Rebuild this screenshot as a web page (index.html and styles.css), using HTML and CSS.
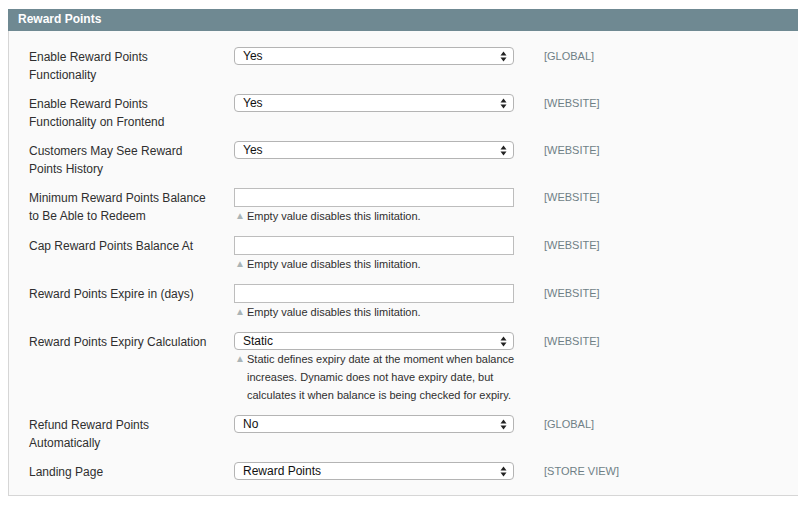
FILE: index.html
```html
<!DOCTYPE html>
<html>
<head>
<meta charset="utf-8">
<link rel="stylesheet" href="styles.css">
</head>
<body>
<div class="page">
  <div class="section-head">Reward Points</div>
  <div class="section-body">
    <div class="row">
      <div class="label">Enable Reward Points Functionality</div>
      <div class="value">
        <div class="sel"><select><option>Yes</option></select><svg class="arr" width="7" height="11" viewBox="0 0 7 11"><path d="M3.5 0.5 L6.5 4.5 L0.5 4.5 Z M3.5 10.5 L6.5 6.5 L0.5 6.5 Z" fill="#222"/></svg></div>
      </div>
      <div class="scope">[GLOBAL]</div>
    </div>
    <div class="row">
      <div class="label">Enable Reward Points Functionality on Frontend</div>
      <div class="value">
        <div class="sel"><select><option>Yes</option></select><svg class="arr" width="7" height="11" viewBox="0 0 7 11"><path d="M3.5 0.5 L6.5 4.5 L0.5 4.5 Z M3.5 10.5 L6.5 6.5 L0.5 6.5 Z" fill="#222"/></svg></div>
      </div>
      <div class="scope">[WEBSITE]</div>
    </div>
    <div class="row">
      <div class="label">Customers May See Reward Points History</div>
      <div class="value">
        <div class="sel"><select><option>Yes</option></select><svg class="arr" width="7" height="11" viewBox="0 0 7 11"><path d="M3.5 0.5 L6.5 4.5 L0.5 4.5 Z M3.5 10.5 L6.5 6.5 L0.5 6.5 Z" fill="#222"/></svg></div>
      </div>
      <div class="scope">[WEBSITE]</div>
    </div>
    <div class="row">
      <div class="label">Minimum Reward Points Balance to Be Able to Redeem</div>
      <div class="value">
        <input class="text" type="text">
        <p class="note"><span class="tri">▲</span>Empty value disables this limitation.</p>
      </div>
      <div class="scope">[WEBSITE]</div>
    </div>
    <div class="row">
      <div class="label">Cap Reward Points Balance At</div>
      <div class="value">
        <input class="text" type="text">
        <p class="note"><span class="tri">▲</span>Empty value disables this limitation.</p>
      </div>
      <div class="scope">[WEBSITE]</div>
    </div>
    <div class="row">
      <div class="label">Reward Points Expire in (days)</div>
      <div class="value">
        <input class="text" type="text">
        <p class="note"><span class="tri">▲</span>Empty value disables this limitation.</p>
      </div>
      <div class="scope">[WEBSITE]</div>
    </div>
    <div class="row">
      <div class="label">Reward Points Expiry Calculation</div>
      <div class="value">
        <div class="sel"><select><option>Static</option></select><svg class="arr" width="7" height="11" viewBox="0 0 7 11"><path d="M3.5 0.5 L6.5 4.5 L0.5 4.5 Z M3.5 10.5 L6.5 6.5 L0.5 6.5 Z" fill="#222"/></svg></div>
        <p class="note"><span class="tri">▲</span>Static defines expiry date at the moment when balance increases. Dynamic does not have expiry date, but calculates it when balance is being checked for expiry.</p>
      </div>
      <div class="scope">[WEBSITE]</div>
    </div>
    <div class="row">
      <div class="label">Refund Reward Points Automatically</div>
      <div class="value">
        <div class="sel"><select><option>No</option></select><svg class="arr" width="7" height="11" viewBox="0 0 7 11"><path d="M3.5 0.5 L6.5 4.5 L0.5 4.5 Z M3.5 10.5 L6.5 6.5 L0.5 6.5 Z" fill="#222"/></svg></div>
      </div>
      <div class="scope">[GLOBAL]</div>
    </div>
    <div class="row">
      <div class="label">Landing Page</div>
      <div class="value">
        <div class="sel"><select><option>Reward Points</option></select><svg class="arr" width="7" height="11" viewBox="0 0 7 11"><path d="M3.5 0.5 L6.5 4.5 L0.5 4.5 Z M3.5 10.5 L6.5 6.5 L0.5 6.5 Z" fill="#222"/></svg></div>
      </div>
      <div class="scope">[STORE VIEW]</div>
    </div>
  </div>
</div>
</body>
</html>
```
FILE: styles.css
```css
html, body {
  margin: 0;
  padding: 0;
  background: #ffffff;
}
body {
  font-family: "Liberation Sans", Arial, Helvetica, sans-serif;
  font-size: 12px;
  color: #2f2f2f;
}
.page {
  padding: 9px 9px 0 8px;
}
.section-head {
  height: 22px;
  line-height: 21px;
  background: #6f8992;
  color: #ffffff;
  font-weight: bold;
  font-size: 12px;
  padding-left: 10px;
}
.section-body {
  background: #fafafa;
  border-left: 1px solid #d6d6d6;
  border-bottom: 1px solid #d6d6d6;
  padding: 11px 0 9px 20px;
}
.row {
  display: grid;
  grid-template-columns: 205px 280px auto;
  column-gap: 0;
  padding: 5px 0 6px;
}
.label {
  line-height: 18px;
  padding-top: 1px;
  margin-bottom: -1px;
  padding-right: 21px;
}
.value {
  width: 280px;
}
.sel {
  position: relative;
  height: 18px;
}
.sel select {
  -webkit-appearance: none;
  appearance: none;
  display: block;
  width: 280px;
  height: 18px;
  margin: 0;
  padding: 0 0 0 8px;
  border: 1px solid #b4b4b4;
  border-radius: 4px;
  background: #ffffff;
  font-family: "Liberation Sans", Arial, Helvetica, sans-serif;
  font-size: 12px;
  line-height: 16px;
  color: #111;
  outline: none;
}
.sel .arr {
  position: absolute;
  right: 7px;
  top: 4px;
}
.text {
  display: block;
  box-sizing: border-box;
  width: 280px;
  height: 19px;
  margin: 0;
  border: 1px solid #bdbdbd;
  background: #ffffff;
  padding: 0 4px;
  outline: none;
}
.note {
  margin: 0;
  font-size: 11px;
  line-height: 18px;
  color: #2f2f2f;
  padding-left: 13px;
  width: 272px;
  position: relative;
}
.note .tri {
  position: absolute;
  left: 1px;
  top: 0;
  font-size: 10px;
  color: #a9b4b7;
}
.scope {
  font-size: 11px;
  line-height: 18px;
  color: #6f7f86;
  padding-left: 30px;
}
```
